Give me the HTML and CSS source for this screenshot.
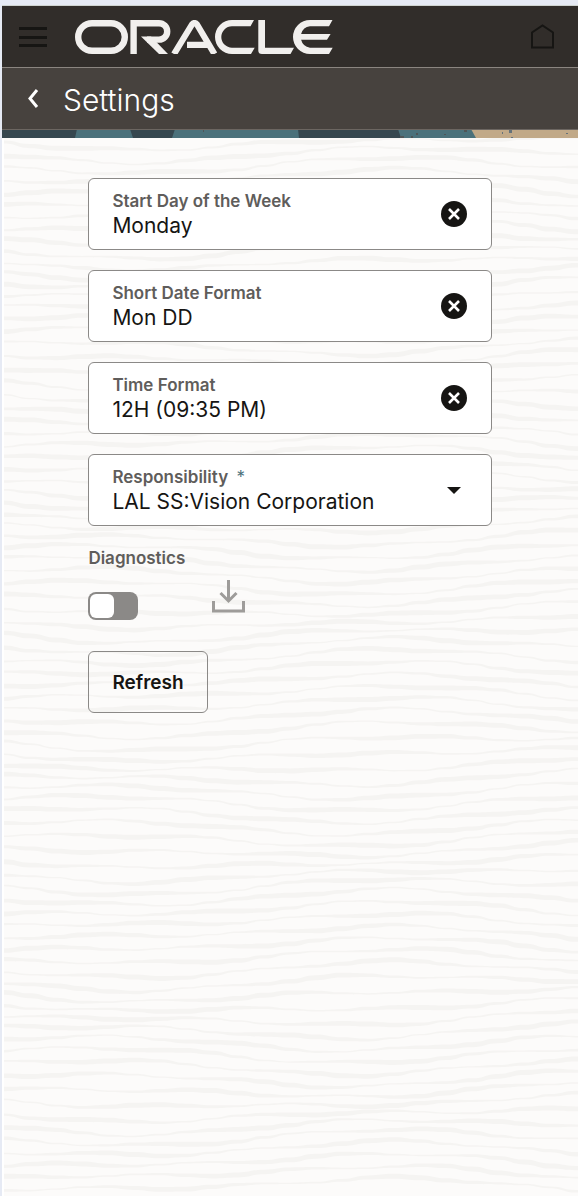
FILE: index.html
```html
<!DOCTYPE html>
<html lang="en">
<head>
<meta charset="utf-8">
<meta name="viewport" content="width=device-width, initial-scale=1">
<title>Settings</title>
<link rel="stylesheet" href="styles.css">
</head>
<body>
<div class="app">
  <header class="topbar">
    <button class="icon-button" type="button" aria-label="Menu">
      <svg width="28" height="22" viewBox="0 0 28 22" fill="none" stroke="#161513" stroke-width="3"><path d="M0 2.5h28M0 11.5h28M0 19.5h28"/></svg>
    </button>
    <svg class="logo" role="img" aria-label="Oracle" width="258" height="34" viewBox="0 0 258 34" fill="#f1efed">
      <rect x="3.2" y="3.2" width="46.6" height="27.6" rx="13.8" fill="none" stroke="#f1efed" stroke-width="6.4"/>
      <path d="M58.6 34V3.2H84a8.1 8.1 0 0 1 0 16.4H72" fill="none" stroke="#f1efed" stroke-width="6.4"/>
      <path d="M66 16.5H76L93 34H84z"/>
      <path d="M99 34L117 4.5Q119.5 1.5 122 4.5L139.5 34M112 24.8H133" fill="none" stroke="#f1efed" stroke-width="6.2"/>
      <path d="M179 0H157a17 17 0 0 0 0 34H176L179.7 27.7H157a10.7 10.7 0 0 1 0-21.4H175.5z"/>
      <path d="M183.3 0H190V27.7H219L215.5 34H187Q183.3 34 183.3 30.5z"/>
      <path d="M257.5 0H235a17 17 0 0 0 0 34H254L257.7 27.7H235a10.7 10.7 0 0 1-8.9-7.9H252L255.6 13.9H226.1A10.7 10.7 0 0 1 235 6.3H254z"/>
    </svg>
    <button class="icon-button home" type="button" aria-label="Home">
      <svg width="24" height="25" viewBox="0 0 24 25" fill="none" stroke="#161513" stroke-width="2"><path d="M2 23.5V8.500L12.500 1.500L23 8.500V23.500z"/></svg>
    </button>
  </header>
  <div class="titlebar">
    <button class="icon-button" type="button" aria-label="Back">
      <svg width="12" height="20" viewBox="0 0 12 20" fill="none" stroke="#fff" stroke-width="3"><path d="M10 1L3 9.500L10 18"/></svg>
    </button>
    <h1 class="title">Settings</h1>
  </div>
  <svg class="strip" viewBox="0 0 576 9" preserveAspectRatio="none" aria-hidden="true">
    <path fill="#36474f" d="M0 0h576v9H0z"/>
    <path fill="#4b717b" d="M75 0h53l3 9H73zM173 0h123l1 9H170zM396 0h76l6 9H399z"/>
    <path fill="#c1a988" d="M469 0h107v9H474z"/>
    <path fill="#65727a" d="M507 1h3v3h-3zM500 3h1v2h-1zM552 0h4v1h-4zM564 4h2v1h-2zM520 0h3v1h-3zM509 8h2v1h-2z"/>
    <path fill="#4f5557" d="M398 7h4v2h-4zM409 7h2v2h-2zM414 4h2v2h-2zM442 5h2v1h-2zM462 1h3v2h-3zM201 1h1v2h-1z"/>
    <path fill="#6c6661" d="M0 0h576v1H0z"/>
  </svg>
  <main class="content">
    <svg class="grain" aria-hidden="true"><g id="grain"></g></svg>
    <form class="form">
      <div class="field">
        <div class="field-text">
          <label for="start-day">Start Day of the Week</label>
          <input id="start-day" type="text" value="Monday">
        </div>
        <button class="clear" type="button" aria-label="Clear start day"><svg width="26" height="26" viewBox="0 0 26 26"><circle cx="13" cy="13" r="13" fill="#161513"/><path d="M8 8l10 10M18 8L8 18" stroke="#fff" stroke-width="2.6"/></svg></button>
      </div>
      <div class="field">
        <div class="field-text">
          <label for="short-date">Short Date Format</label>
          <input id="short-date" type="text" value="Mon DD">
        </div>
        <button class="clear" type="button" aria-label="Clear date format"><svg width="26" height="26" viewBox="0 0 26 26"><circle cx="13" cy="13" r="13" fill="#161513"/><path d="M8 8l10 10M18 8L8 18" stroke="#fff" stroke-width="2.6"/></svg></button>
      </div>
      <div class="field">
        <div class="field-text">
          <label for="time-format">Time Format</label>
          <input id="time-format" type="text" value="12H (09:35 PM)">
        </div>
        <button class="clear" type="button" aria-label="Clear time format"><svg width="26" height="26" viewBox="0 0 26 26"><circle cx="13" cy="13" r="13" fill="#161513"/><path d="M8 8l10 10M18 8L8 18" stroke="#fff" stroke-width="2.6"/></svg></button>
      </div>
      <div class="field">
        <div class="field-text">
          <label for="responsibility">Responsibility <span class="required">*</span></label>
          <select id="responsibility" required><option>LAL SS:Vision Corporation</option></select>
        </div>
        <svg class="arrow" width="26" height="8" viewBox="0 0 26 8" aria-hidden="true"><path d="M6 1h14l-7 7z" fill="#161513"/></svg>
      </div>
      <label class="caption" for="diagnostics">Diagnostics</label>
      <div class="diagnostics">
        <input id="diagnostics" class="switch" type="checkbox" role="switch">
        <button class="icon-button" type="button" aria-label="Download diagnostics">
          <svg width="33" height="33" viewBox="0 0 33 33" fill="none" stroke="#9e9c9a" stroke-width="3"><path d="M16.5 0v21M8.5 13l8 8l8-8M1.5 21v10h30V21"/></svg>
        </button>
      </div>
      <button class="refresh" type="button">Refresh</button>
    </form>
  </main>
</div>
<script src="grain.js"></script>
</body>
</html>
```
FILE: styles.css
```css
* { box-sizing: border-box; }

body {
  margin: 0;
  background: #e6eaf4;
  color: #161513;
  font-family: Inter, "Liberation Sans", sans-serif;
}

button, input, select { font: inherit; color: inherit; }

.app {
  display: flex;
  flex-direction: column;
  min-height: 100vh;
  padding: 5px 0 0 2px;
}

.icon-button, .clear {
  display: flex;
  padding: 0;
  border: 0;
  background: none;
}

.topbar {
  display: flex;
  align-items: center;
  gap: 28px;
  height: 63px;
  padding: 0 24px 0 17px;
  background: #312d2a;
  border-top: 1px solid #cfd4d0;
  border-bottom: 1px solid #8b8580;
}

.logo { flex: none; }
.home { margin-left: auto; }

.titlebar {
  display: flex;
  align-items: center;
  gap: 24px;
  height: 61px;
  padding: 0 25px;
  background: #47423e;
}

.title {
  margin: 0;
  padding-top: 2px;
  color: #fff;
  font-size: 30px;
  font-weight: 300;
  line-height: 40px;
}

.strip {
  display: block;
  width: 100%;
  height: 9px;
}

.content {
  position: relative;
  flex: 1;
  padding: 40px 15%;
  overflow: hidden;
  background: #fcfbfa;
  box-shadow: inset 2px 0 #fff;
}

.grain {
  position: absolute;
  inset: 0 0 0 2px;
  width: 100%;
  height: 100%;
  fill: #f5f4f2;
}

.form {
  position: relative;
  display: flex;
  flex-direction: column;
  gap: 20px;
}

.field {
  display: flex;
  align-items: center;
  min-height: 72px;
  padding: 0 24px 0 23px;
  background: #fff;
  border: 1px solid #8b8987;
  border-radius: 6px;
}

.field-text {
  display: flex;
  flex: 1;
  flex-direction: column;
  min-width: 0;
  padding-top: 3px;
}

.field label, .caption {
  color: #5f5d5b;
  font-size: 17px;
  font-weight: 600;
  line-height: 21px;
}

.required { margin-left: 4px; color: #4b717b; }

.field input, .field select {
  appearance: none;
  width: 100%;
  height: 28px;
  padding: 0;
  border: 0;
  outline: 0;
  background: none;
  font-size: 21px;
  line-height: 28px;
}

.field .required { font-weight: 400; }

.caption { line-height: 24px; }

.diagnostics {
  display: flex;
  align-items: flex-end;
  gap: 74px;
  margin-top: -10px;
}

.diagnostics .icon-button { margin-bottom: 7px; }

.switch {
  appearance: none;
  display: flex;
  width: 50px;
  height: 28px;
  margin: 0;
  padding: 2px;
  border-radius: 8px;
  background: #8b8987;
}

.switch::before {
  content: "";
  width: 24px;
  border-radius: 6px;
  background: #fff;
}

.refresh {
  align-self: flex-start;
  height: 62px;
  margin-top: 11px;
  padding: 0 23px;
  border: 1px solid #8b8987;
  border-radius: 6px;
  background: transparent;
  font-size: 19px;
  font-weight: 600;
}
```
FILE: grain.js
```js
// Draws the wood-grain ribbons behind the form.
const grain = document.getElementById("grain");
const box = grain.ownerSVGElement.getBoundingClientRect();
const step = 26;

for (let row = 0, top = 4; top < box.height; row += 1, top += 12) {
  const sway = Math.sin(row * 0.31);
  const upper = [];
  const lower = [];
  for (let x = 0; x <= box.width + step; x += step) {
    const drift = 6 * Math.sin(x / 110 + 1.6 * sway) + 3 * Math.sin(x / 61 - 2.3 * sway);
    const ripple = 1.6 * Math.sin(x / 23 + row * 2.1);
    const y = top + drift + ripple;
    const half = 1.6 + 0.9 * Math.sin(x / 38 + row * 1.7);
    upper.push([x, y - half]);
    lower.unshift([x, y + half]);
  }
  const smooth = (points) => points.slice(1).map(([x, y], i) => {
    const [px, py] = points[i];
    const mid = (px + x) / 2;
    return `C${mid} ${py} ${mid} ${y} ${x} ${y}`;
  }).join("");
  const path = document.createElementNS("http://www.w3.org/2000/svg", "path");
  path.setAttribute("d", `M${upper[0]}${smooth(upper)}L${lower[0]}${smooth(lower)}Z`);
  grain.append(path);
}
```
